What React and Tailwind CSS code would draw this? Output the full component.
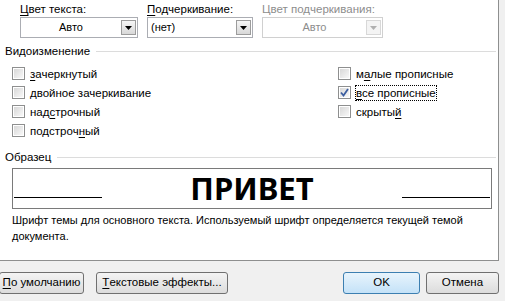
import React from "react";

const F = { fontFamily: '"Liberation Sans", Arial, sans-serif' };

function Arrow({ disabled }) {
  return (
    <svg width="7" height="4" viewBox="0 0 7 4">
      <path d="M0 0 L7 0 L3.5 4 Z" fill={disabled ? "#b0b0b0" : "#000"} />
    </svg>
  );
}

function Combo({ w, text, center, disabled }) {
  return (
    <div
      className={`h-[21px] border bg-white flex items-center ${disabled ? "border-[#d0d0d0]" : "border-[#abadb3]"}`}
      style={{ width: w }}
    >
      <div
        className={`flex-1 text-[11px] leading-none whitespace-nowrap ${center ? "text-center" : "pl-[3px]"} ${disabled ? "text-[#8d8d8d]" : "text-black"}`}
      >
        {text}
      </div>
      <div
        className={`w-[15px] h-[15px] mr-[1px] border flex items-center justify-center ${disabled ? "border-[#d8d8d8] bg-[#f4f4f4]" : "border-[#9c9c9c] bg-gradient-to-b from-[#f6f6f6] to-[#d8d8d8]"}`}
      >
        <Arrow disabled={disabled} />
      </div>
    </div>
  );
}

function Check({ checked }) {
  return (
    <div className="w-[13px] h-[13px] border border-[#8e8f8f] bg-white p-[1px] shrink-0">
      <div className="w-full h-full bg-gradient-to-br from-[#d8d8d8] to-[#f8f8f8] flex items-center justify-center">
        {checked && (
          <svg width="9" height="9" viewBox="0 0 9 9">
            <path d="M1 4.5 L3.5 7.5 L8 1" stroke="#3c5ea0" strokeWidth="1.8" fill="none" />
          </svg>
        )}
      </div>
    </div>
  );
}

function U({ children }) {
  return <span className="underline underline-offset-2">{children}</span>;
}

function Row({ checked, focus, children }) {
  return (
    <div className="h-[19px] flex items-center">
      <Check checked={checked} />
      <span
        className={`ml-[4px] text-[11.5px] leading-[14px] text-black whitespace-nowrap ${focus ? "border border-dotted border-black" : "border border-transparent"}`}
      >
        {children}
      </span>
    </div>
  );
}

function Btn({ w, children, primary, className = "" }) {
  return (
    <div
      className={`h-[22px] rounded-[3px] border flex items-center justify-center text-[11.5px] text-black whitespace-nowrap ${primary ? "border-[#3c7fb1] bg-gradient-to-b from-[#e8f4fc] to-[#c4e2f8]" : "border-[#707070] bg-gradient-to-b from-[#f4f4f4] to-[#dcdcdc]"} ${className}`}
      style={{ width: w }}
    >
      {children}
    </div>
  );
}

export default function App() {
  return (
    <div className="w-[505px] h-[301px] bg-[#f0f0f0] overflow-hidden" style={F}>
      <div className="w-[499px] h-[261px] bg-white border-r border-b border-[#8e8f8f] relative">
        {/* top combos */}
        <div className="flex pl-[20px] pt-[2px]">
          <div className="w-[120px]">
            <div className="h-[15px] text-[11.5px] leading-[14px] text-black whitespace-nowrap">
              <U>Ц</U>вет текста:
            </div>
            <Combo w={118} text="Авто" center />
          </div>
          <div className="w-[106px] ml-[7px]">
            <div className="h-[15px] text-[11.5px] leading-[14px] text-black whitespace-nowrap">
              <U>П</U>одчеркивание:
            </div>
            <Combo w={106} text="(нет)" />
          </div>
          <div className="w-[121px] ml-[9px]">
            <div className="h-[15px] text-[11.5px] leading-[14px] text-[#8d8d8d] whitespace-nowrap">Цвет подчеркивания:</div>
            <Combo w={121} text="Авто" center disabled />
          </div>
        </div>

        {/* Видоизменение */}
        <div className="flex items-center pl-[5px] pr-[2px] mt-[6px] h-[14px]">
          <span className="text-[11.5px] leading-[14px] text-black">Видоизменение</span>
          <div className="flex-1 h-px bg-[#dcdcdc] ml-[6px]" />
        </div>
        <div className="flex pl-[12px] mt-[6px]">
          <div className="w-[326px]">
            <Row>
              <U>з</U>ачеркнутый
            </Row>
            <Row>
              <U>д</U>войное зачеркивание
            </Row>
            <Row>
              над<U>с</U>трочный
            </Row>
            <Row>
              подстроч<U>н</U>ый
            </Row>
          </div>
          <div>
            <Row>
              м<U>а</U>лые прописные
            </Row>
            <Row checked focus>
              <U>в</U>се прописные
            </Row>
            <Row>
              скрыты<U>й</U>
            </Row>
          </div>
        </div>

        {/* Образец */}
        <div className="flex items-center pl-[5px] pr-[2px] mt-[10px] h-[14px]">
          <span className="text-[11.5px] leading-[14px] text-black">Образец</span>
          <div className="flex-1 h-px bg-[#dcdcdc] ml-[6px]" />
        </div>
        <div className="ml-[12px] mt-[4px] w-[480px] h-[41px] border border-[#7a7a7a] flex items-end">
          <div className="w-[88px] h-px bg-black ml-[1px] mb-[10px]" />
          <div
            className="flex-1 self-center text-center text-[31px] font-bold leading-none text-black"
            style={{ fontFamily: '"Noto Sans", sans-serif' }}
          >
            ПРИВЕТ
          </div>
          <div className="w-[88px] h-px bg-black mr-[1px] mb-[10px]" />
        </div>
        <div className="pl-[12px] pr-[20px] mt-[3px] text-[11px] leading-[16px] text-black">
          Шрифт темы для основного текста. Используемый шрифт определяется текущей темой документа.
        </div>
      </div>

      {/* buttons */}
      <div className="flex mt-[11px]">
        <Btn w={85} className="-ml-[1px]">
          <U>П</U>о умолчанию
        </Btn>
        <Btn w={132} className="ml-[12px]">
          <U>Т</U>екстовые эффекты...
        </Btn>
        <Btn w={77} primary className="ml-[115px]">
          OK
        </Btn>
        <Btn w={73} className="ml-[6px]">
          Отмена
        </Btn>
      </div>
    </div>
  );
}
